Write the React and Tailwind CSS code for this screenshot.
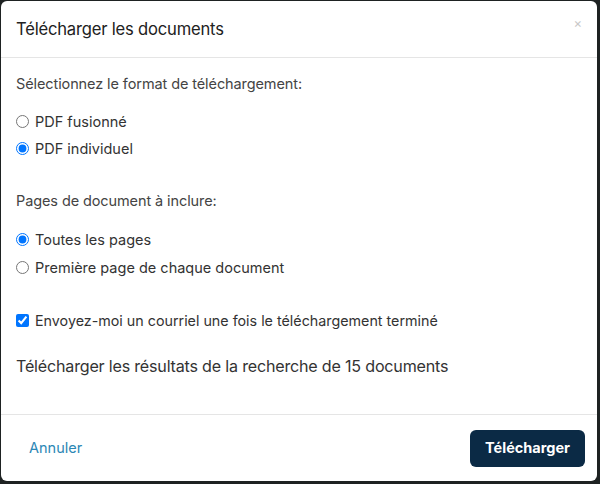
import React, { useState } from 'react';

export default function App() {
    const [format, setFormat] = useState('individuel');
    const [pages, setPages] = useState('toutes');
    const [notify, setNotify] = useState(true);

    return (
        <div className="w-[600px] h-[484px] bg-[#1e2222] pt-[1px] pl-[1px]" style={{ fontFamily: 'Inter, "Noto Sans", sans-serif' }}>
            <div className="w-[596px] h-[480px] bg-white rounded-md flex flex-col text-[#333]">
                {/* Header */}
                <div className="h-[57px] border-b border-[#e5e5e5] flex items-center justify-between pl-[15px] pr-[15px]">
                    <h2 className="text-[16.6px] text-[#222] tracking-[-0.2px]">Télécharger les documents</h2>
                    <button className="text-[#c8c8c8] text-[13px] leading-none -mt-[12px]">×</button>
                </div>

                {/* Body */}
                <div className="flex-1 px-[15px] pt-[15px]">
                    <p className="text-[14.5px] text-[#444] tracking-[-0.1px]">Sélectionnez le format de téléchargement:</p>
                    <div className="mt-[17px] flex flex-col gap-[7px]">
                        <label className="flex items-center gap-[6px] text-[14.5px] h-[20px]">
                            <input type="radio" name="format" checked={format === 'fusionne'} onChange={() => setFormat('fusionne')} className="m-0 w-[13px] h-[13px]" />
                            PDF fusionné
                        </label>
                        <label className="flex items-center gap-[6px] text-[14.5px] h-[20px]">
                            <input type="radio" name="format" checked={format === 'individuel'} onChange={() => setFormat('individuel')} className="m-0 w-[13px] h-[13px]" />
                            PDF individuel
                        </label>
                    </div>

                    <p className="mt-[31px] text-[14.5px] text-[#444] tracking-[-0.1px]">Pages de document à inclure:</p>
                    <div className="mt-[18px] flex flex-col gap-[8px]">
                        <label className="flex items-center gap-[6px] text-[14.5px] h-[20px]">
                            <input type="radio" name="pages" checked={pages === 'toutes'} onChange={() => setPages('toutes')} className="m-0 w-[13px] h-[13px]" />
                            Toutes les pages
                        </label>
                        <label className="flex items-center gap-[6px] text-[14.5px] h-[20px]">
                            <input type="radio" name="pages" checked={pages === 'premiere'} onChange={() => setPages('premiere')} className="m-0 w-[13px] h-[13px]" />
                            Première page de chaque document
                        </label>
                    </div>

                    <label className="mt-[33px] flex items-center gap-[6px] text-[14.3px] h-[20px]">
                        <input type="checkbox" checked={notify} onChange={() => setNotify(!notify)} className="m-0 w-[13px] h-[13px]" />
                        Envoyez-moi un courriel une fois le téléchargement terminé
                    </label>

                    <p className="mt-[23px] text-[16.1px] text-[#333] tracking-[-0.2px]">Télécharger les résultats de la recherche de 15 documents</p>
                </div>

                {/* Footer */}
                <div className="h-[67px] border-t border-[#e5e5e5] flex items-center justify-between pl-[28px] pr-[12px]">
                    <button className="text-[14.5px] text-[#2b87b5]">Annuler</button>
                    <button className="h-[37px] px-[15px] bg-[#0b2a45] text-white text-[14.5px] font-bold rounded-md">Télécharger</button>
                </div>
            </div>
        </div>
    );
}
